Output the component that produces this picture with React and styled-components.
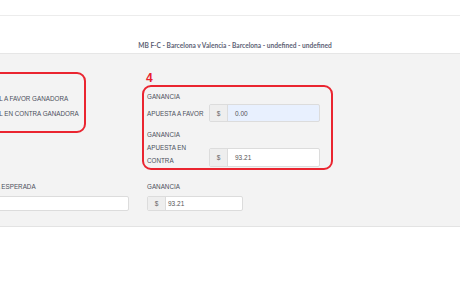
import styled, { createGlobalStyle } from "styled-components";

const Global = createGlobalStyle`
  html, body { margin: 0; padding: 0; background: #fff; }
  body { font-family: "Liberation Sans", Arial, sans-serif; overflow: hidden; }
`;

const Page = styled.div`
  width: 460px;
  height: 295px;
  overflow: hidden;
  background: #fff;
`;

const TopStrip = styled.div`
  height: 15px;
  border-bottom: 1px solid #ececec;
`;

const Header = styled.div`
  height: 38px;
  display: flex;
  align-items: flex-end;
  justify-content: center;
  padding-bottom: 4px;
  box-sizing: border-box;
  border-bottom: 1px solid #e6e6e6;
`;

const Title = styled.div`
  font-family: Lato, "Open Sans", sans-serif;
  font-weight: 700;
  font-size: 6.6px;
  color: #5d6275;
  padding-left: 10px;
`;

const Panel = styled.div`
  background: #f3f3f3;
  height: 173px;
  box-sizing: border-box;
  border-bottom: 1px solid #e3e3e3;
  padding-top: 18px;
`;

const TopRow = styled.div`
  display: flex;
  align-items: flex-start;
`;

const Box = styled.div`
  border: 2px solid #ea2530;
  border-radius: 9px;
  box-sizing: border-box;
  padding: ${(p) => p.$pad};
  width: ${(p) => p.$w}px;
  height: ${(p) => p.$h}px;
`;

const LeftWrap = styled.div`
  margin-left: -60px;
`;

const RightCol = styled.div`
  margin-left: 56px;
  display: flex;
  flex-direction: column;
`;

const Number = styled.div`
  color: #e8212c;
  font-family: "Liberation Sans", Arial, sans-serif;
  font-weight: 700;
  font-size: 12px;
  line-height: 13px;
  padding-left: 4px;
`;

const Label = styled.div`
  font-size: 6.3px;
  line-height: ${(p) => p.$lh || 13}px;
  color: #4b505c;
  text-transform: uppercase;
  white-space: nowrap;
`;

const FieldRow = styled.div`
  display: flex;
  align-items: ${(p) => p.$align || "center"};
  justify-content: space-between;
  margin-top: ${(p) => p.$mt || 0}px;
`;

const Group = styled.div`
  display: flex;
  width: ${(p) => p.$w}px;
  height: ${(p) => p.$h}px;
  box-sizing: border-box;
  border: 1px solid #dcdcdc;
  border-radius: 2px;
  overflow: hidden;
  background: ${(p) => p.$bg || "#fff"};
`;

const Addon = styled.div`
  width: 17px;
  flex: none;
  background: #eeeeee;
  border-right: 1px solid #dcdcdc;
  display: flex;
  align-items: center;
  justify-content: center;
  font-size: 6.5px;
  color: #666;
`;

const Value = styled.div`
  flex: 1;
  display: flex;
  align-items: center;
  padding-left: ${(p) => p.$pl || 7}px;
  font-size: 6.5px;
  color: #555;
`;

const BottomRow = styled.div`
  display: flex;
  margin-top: 10px;
`;

const BottomField = styled.div`
  display: flex;
  flex-direction: column;
  gap: 3px;
  margin-left: ${(p) => p.$ml}px;
`;

export default function App() {
  return (
    <Page>
      <Global />
      <TopStrip />
      <Header>
        <Title>MB F-C - Barcelona v Valencia - Barcelona - undefined - undefined</Title>
      </Header>
      <Panel>
        <TopRow>
          <LeftWrap>
            <Box $w={146} $h={61} $pad="17px 0 0 41px">
              <Label $lh={15}>Total a favor ganadora</Label>
              <Label $lh={15}>Total en contra ganadora</Label>
            </Box>
          </LeftWrap>
          <RightCol>
            <Number>4</Number>
            <Box $w={191} $h={85} $pad="3px 11px 0 3px">
              <Label $lh={14}>Ganancia</Label>
              <FieldRow>
                <Label>Apuesta a favor</Label>
                <Group $w={111} $h={18} $bg="#e8f0fe">
                  <Addon>$</Addon>
                  <Value>0.00</Value>
                </Group>
              </FieldRow>
              <FieldRow $align="flex-end" $mt={6}>
                <div>
                  <Label>Ganancia</Label>
                  <Label>Apuesta en</Label>
                  <Label>Contra</Label>
                </div>
                <Group $w={111} $h={19}>
                  <Addon>$</Addon>
                  <Value>93.21</Value>
                </Group>
              </FieldRow>
            </Box>
          </RightCol>
        </TopRow>
        <BottomRow>
          <BottomField $ml={-33}>
            <Label>Ganancia esperada</Label>
            <Group $w={162} $h={15} />
          </BottomField>
          <BottomField $ml={18}>
            <Label>Ganancia</Label>
            <Group $w={96} $h={15}>
              <Addon>$</Addon>
              <Value $pl={2}>93.21</Value>
            </Group>
          </BottomField>
        </BottomRow>
      </Panel>
    </Page>
  );
}
